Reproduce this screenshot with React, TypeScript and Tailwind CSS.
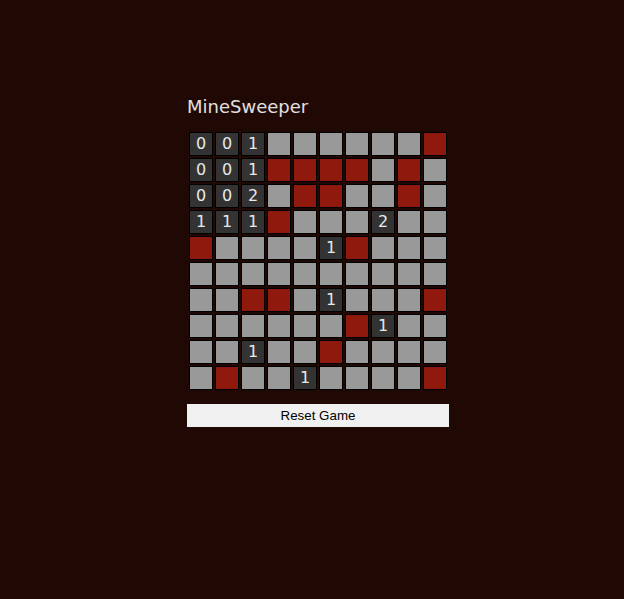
import React from 'react';

type Cell = number | 'G' | 'R';

const board: Cell[][] = [
  [0, 0, 1, 'G', 'G', 'G', 'G', 'G', 'G', 'R'],
  [0, 0, 1, 'R', 'R', 'R', 'R', 'G', 'R', 'G'],
  [0, 0, 2, 'G', 'R', 'R', 'G', 'G', 'R', 'G'],
  [1, 1, 1, 'R', 'G', 'G', 'G', 2, 'G', 'G'],
  ['R', 'G', 'G', 'G', 'G', 1, 'R', 'G', 'G', 'G'],
  ['G', 'G', 'G', 'G', 'G', 'G', 'G', 'G', 'G', 'G'],
  ['G', 'G', 'R', 'R', 'G', 1, 'G', 'G', 'G', 'R'],
  ['G', 'G', 'G', 'G', 'G', 'G', 'R', 1, 'G', 'G'],
  ['G', 'G', 1, 'G', 'G', 'R', 'G', 'G', 'G', 'G'],
  ['G', 'R', 'G', 'G', 1, 'G', 'G', 'G', 'G', 'R'],
];

function Square({ value }: { value: Cell }) {
  if (value === 'G') {
    return <div className="w-6 h-6 border border-black bg-[#999999]" />;
  }
  if (value === 'R') {
    return <div className="w-6 h-6 border border-black bg-[#8f190c]" />;
  }
  return (
    <div className="w-6 h-6 border border-black bg-[#333333] flex items-center justify-center text-[16px] leading-none text-[#e8e8e8]">
      {value}
    </div>
  );
}

export default function App() {
  return (
    <div className="min-h-[599px] bg-[#200904] pt-[96px] pl-[187px] font-['DejaVu_Sans',sans-serif]">
      <div className="w-[262px]">
        <h1 className="text-[18px] leading-[22px] text-[#e0e0e0]">MineSweeper</h1>
        <div className="mt-3 grid grid-cols-10 gap-[2px] p-[2px]">
          {board.map((row, r) =>
            row.map((value, c) => <Square key={`${r}-${c}`} value={value} />)
          )}
        </div>
        <button className="mt-3 w-full h-[23px] bg-[#f0f0f0] text-black text-[13.33px] font-['Liberation_Sans',Arial,sans-serif]">
          Reset Game
        </button>
      </div>
    </div>
  );
}
